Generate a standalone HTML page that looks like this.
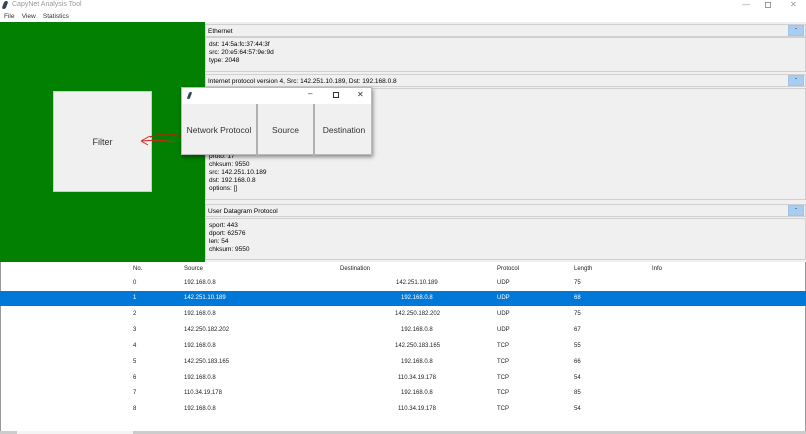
<!DOCTYPE html>
<html><head><style>
*{margin:0;padding:0;box-sizing:border-box}
body{width:806px;height:434px;overflow:hidden;background:#fff;font-family:"Liberation Sans",sans-serif;font-size:6.5px;color:#000;position:relative}
.a{position:absolute}
.hdr{background:#f0f0f0;border:1px solid #d0d0d0;}
.body{background:#f0f0f0;border:1px solid #d0d0d0;line-height:8px;padding:3px 3px}
.btn{position:absolute;right:1px;width:16px;background:#a9cdf0;border:1px solid #a0c4e8;font-size:6px;text-align:center}
.r{position:absolute;height:15px;left:0;width:806px;font-size:6px;line-height:15px;color:#222}
.r span{position:absolute}
</style></head><body>
<div class="a" style="left:3px;top:1px;width:4px;height:8px;background:#345;transform:skewX(-20deg);border-radius:2px"></div>
<div class="a" style="left:12px;top:1px;color:#999;font-size:7px">CapyNet Analysis Tool</div>
<div class="a" style="left:742px;top:0px;color:#999;font-size:8px">—</div>
<div class="a" style="left:765px;top:2px;width:6px;height:6px;border:1px solid #999"></div>
<div class="a" style="left:790px;top:0px;color:#999;font-size:8px">✕</div>
<div class="a" style="left:4px;top:13px;font-size:6.5px;color:#333">File&nbsp;&nbsp;&nbsp;&nbsp;View&nbsp;&nbsp;&nbsp;&nbsp;Statistics</div>

<div class="a" style="left:0;top:22px;width:205px;height:240px;background:#018001"></div>
<div class="a" style="left:53px;top:91px;width:99px;height:101px;background:#f0f0f0;border:1px solid #ccc;font-size:9px;color:#333;text-align:center;line-height:101px">Filter</div>
<svg class="a" style="left:138px;top:125px" width="50" height="25"><path d="M35 17 Q24 14 3 16 M3 16 L12 11 M3 16 L10 20" stroke="#e02020" stroke-width="1" fill="none"/><path d="M12 12 Q30 6 44 12" stroke="#a03010" stroke-width="1.2" fill="none"/></svg>

<div class="a" style="left:205px;top:22px;width:601px;height:240px;background:#f0f0f0"></div>
<div class="a hdr" style="left:205px;top:24px;width:601px;height:13px;padding:2.5px 2px">Ethernet<div class="btn" style="top:0;height:11px">-</div></div>
<div class="a body" style="left:205px;top:37px;width:601px;height:35px">dst: 14:5a:fc:37:44:3f<br>src: 20:e5:64:57:9e:9d<br>type: 2048</div>
<div class="a hdr" style="left:205px;top:74px;width:601px;height:13px;padding:2.5px 2px">Internet protocol version 4, Src: 142.251.10.189, Dst: 192.168.0.8<div class="btn" style="top:0;height:11px">-</div></div>
<div class="a body" style="left:205px;top:88px;width:601px;height:112px;padding-top:64px">proto: 17<br>chksum: 9550<br>src: 142.251.10.189<br>dst: 192.168.0.8<br>options: []</div>
<div class="a hdr" style="left:205px;top:204px;width:601px;height:13px;padding:2.5px 2px">User Datagram Protocol<div class="btn" style="top:0;height:11px">-</div></div>
<div class="a body" style="left:205px;top:218px;width:601px;height:42px">sport: 443<br>dport: 62576<br>len: 54<br>chksum: 9550</div>

<div class="a" style="left:181px;top:87px;width:191px;height:68px;background:#f0f0f0;box-shadow:1px 2px 4px rgba(0,0,0,.45);border:1px solid #bbb">
<div style="height:16px;background:#fff;position:relative"><div class="a" style="left:6px;top:4px;width:3px;height:7px;background:#345;transform:skewX(-20deg);border-radius:2px"></div><div class="a" style="left:126px;top:1px;font-size:8px;color:#333">–</div><div class="a" style="left:151px;top:4px;width:6px;height:6px;border:1px solid #333"></div><div class="a" style="left:175px;top:2px;font-size:8px;color:#333">✕</div></div>
<div class="a" style="left:0;top:16px;width:76px;height:52px;line-height:52px;text-align:center;font-size:8.5px;color:#333;border-right:2px solid #b0b0b0">Network Protocol</div>
<div class="a" style="left:76px;top:16px;width:57px;height:52px;line-height:52px;text-align:center;font-size:8.5px;color:#333;border-right:2px solid #b0b0b0">Source</div>
<div class="a" style="left:133px;top:16px;width:58px;height:52px;line-height:52px;text-align:center;font-size:8.5px;color:#333">Destination</div>
</div>

<div class="a" style="left:0;top:262px;width:806px;height:172px;border:1px solid #999;border-top:none"></div>
<div class="r" style="top:262px"><span style="left:133px">No.</span><span style="left:184px">Source</span><span style="left:340px">Destination</span><span style="left:497px">Protocol</span><span style="left:574px">Length</span><span style="left:652px">Info</span></div>
<div class="r" style="top:276px"><span style="left:133px">0</span><span style="left:184px">192.168.0.8</span><span style="left:396px">142.251.10.189</span><span style="left:497px">UDP</span><span style="left:574px">75</span></div>
<div class="r" style="top:291px;background:#0078d7;color:#fff"><span style="left:133px">1</span><span style="left:184px">142.251.10.189</span><span style="left:401px">192.168.0.8</span><span style="left:497px">UDP</span><span style="left:574px">68</span></div>
<div class="r" style="top:307px"><span style="left:133px">2</span><span style="left:184px">192.168.0.8</span><span style="left:395px">142.250.182.202</span><span style="left:497px">UDP</span><span style="left:574px">75</span></div>
<div class="r" style="top:323px"><span style="left:133px">3</span><span style="left:184px">142.250.182.202</span><span style="left:401px">192.168.0.8</span><span style="left:497px">UDP</span><span style="left:574px">67</span></div>
<div class="r" style="top:339px"><span style="left:133px">4</span><span style="left:184px">192.168.0.8</span><span style="left:395px">142.250.183.165</span><span style="left:497px">TCP</span><span style="left:574px">55</span></div>
<div class="r" style="top:355px"><span style="left:133px">5</span><span style="left:184px">142.250.183.165</span><span style="left:401px">192.168.0.8</span><span style="left:497px">TCP</span><span style="left:574px">66</span></div>
<div class="r" style="top:371px"><span style="left:133px">6</span><span style="left:184px">192.168.0.8</span><span style="left:398px">110.34.19.178</span><span style="left:497px">TCP</span><span style="left:574px">54</span></div>
<div class="r" style="top:386px"><span style="left:133px">7</span><span style="left:184px">110.34.19.178</span><span style="left:401px">192.168.0.8</span><span style="left:497px">TCP</span><span style="left:574px">85</span></div>
<div class="r" style="top:402px"><span style="left:133px">8</span><span style="left:184px">192.168.0.8</span><span style="left:398px">110.34.19.178</span><span style="left:497px">TCP</span><span style="left:574px">54</span></div>
<div class="a" style="left:0;top:431px;width:806px;height:3px;background:#ccc"></div>
<div class="a" style="left:17px;top:431px;width:116px;height:3px;background:#f4f4f4"></div>
</body></html>
